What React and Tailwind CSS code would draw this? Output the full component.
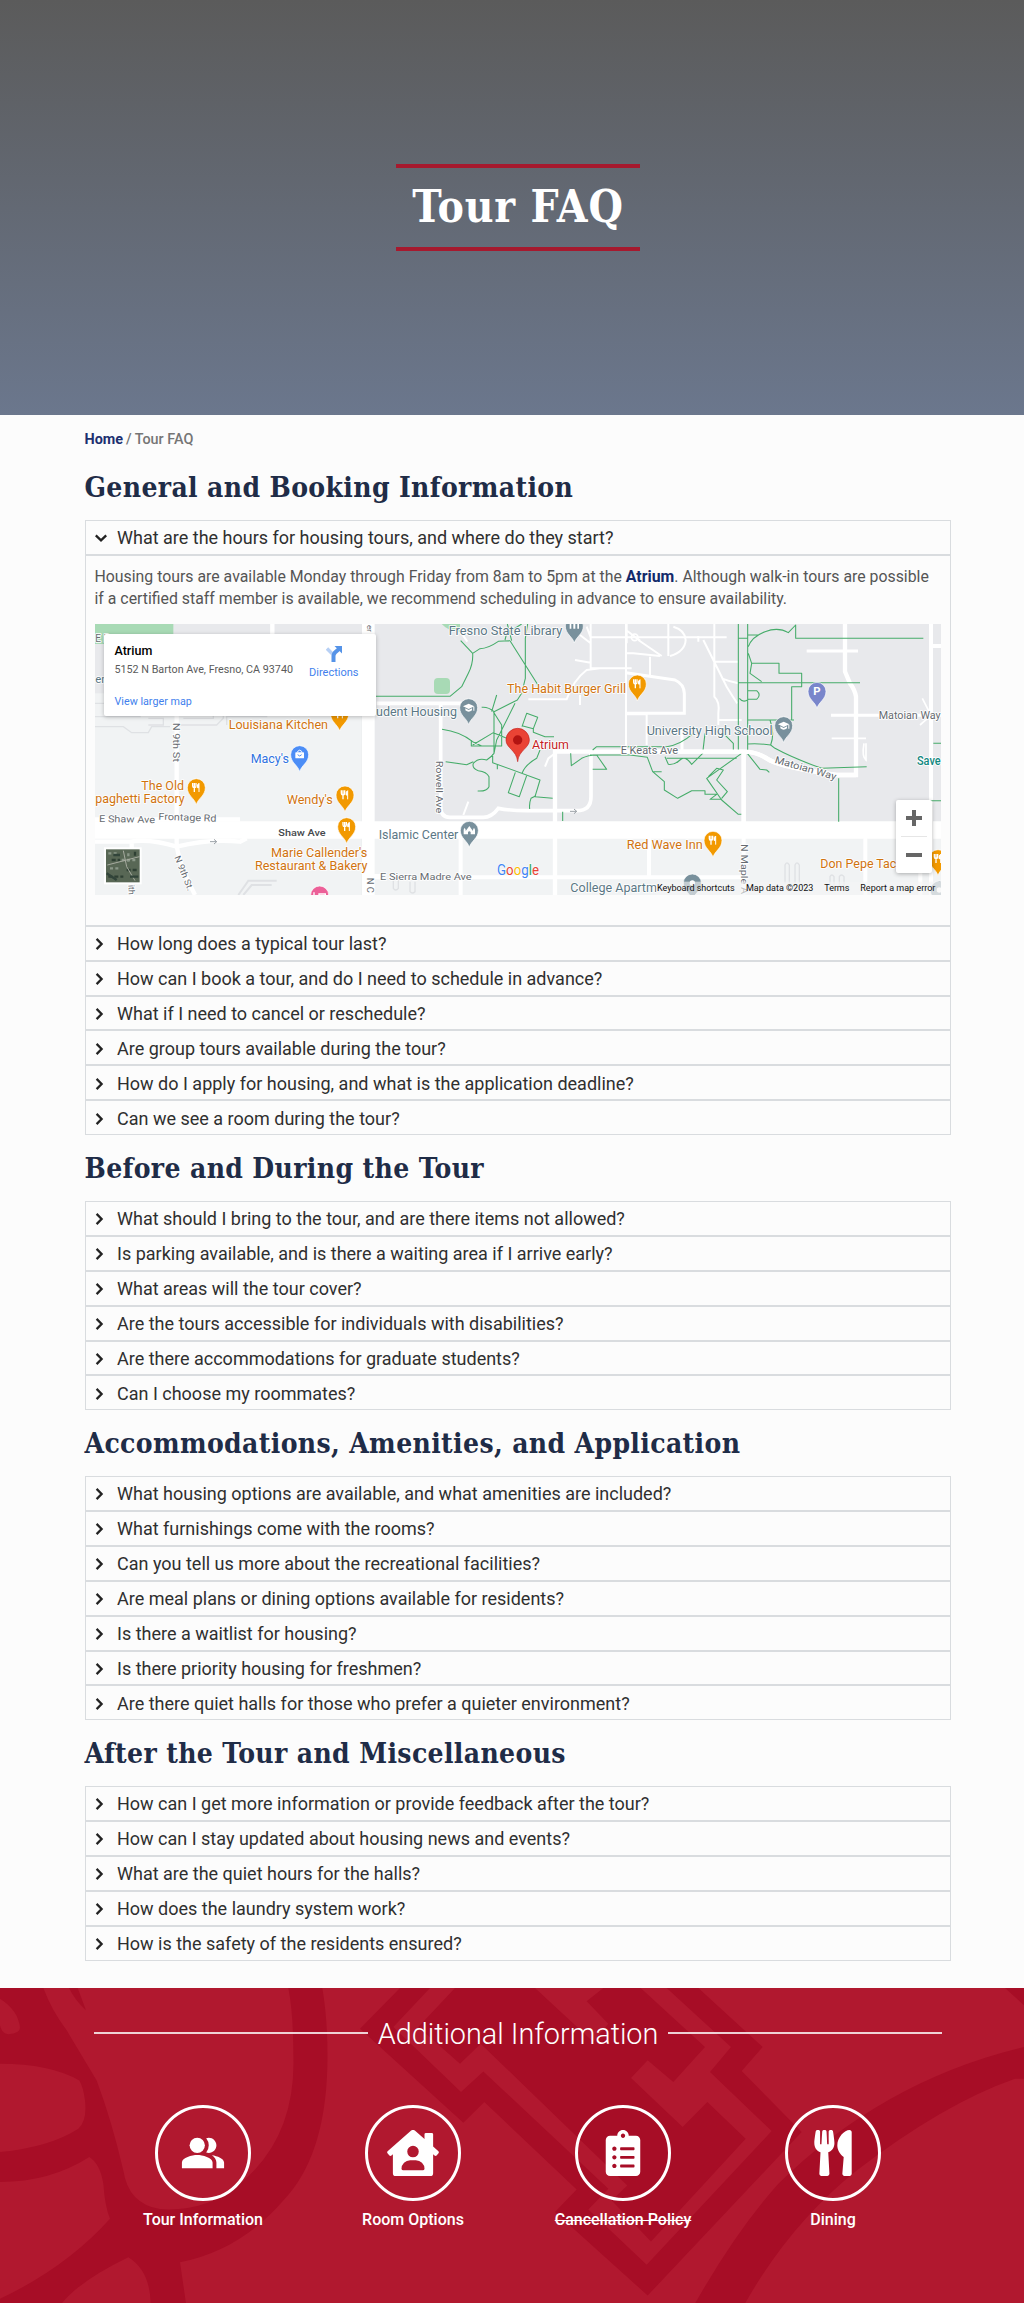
import React from "react";
import { MdPeopleAlt } from "react-icons/md";
import { FaHouseUser, FaClipboardList, FaUtensils } from "react-icons/fa";

const general = [
  "How long does a typical tour last?",
  "How can I book a tour, and do I need to schedule in advance?",
  "What if I need to cancel or reschedule?",
  "Are group tours available during the tour?",
  "How do I apply for housing, and what is the application deadline?",
  "Can we see a room during the tour?",
];
const before = [
  "What should I bring to the tour, and are there items not allowed?",
  "Is parking available, and is there a waiting area if I arrive early?",
  "What areas will the tour cover?",
  "Are the tours accessible for individuals with disabilities?",
  "Are there accommodations for graduate students?",
  "Can I choose my roommates?",
];
const amenities = [
  "What housing options are available, and what amenities are included?",
  "What furnishings come with the rooms?",
  "Can you tell us more about the recreational facilities?",
  "Are meal plans or dining options available for residents?",
  "Is there a waitlist for housing?",
  "Is there priority housing for freshmen?",
  "Are there quiet halls for those who prefer a quieter environment?",
];
const after = [
  "How can I get more information or provide feedback after the tour?",
  "How can I stay updated about housing news and events?",
  "What are the quiet hours for the halls?",
  "How does the laundry system work?",
  "How is the safety of the residents ensured?",
];

function Chevron({ open }) {
  return (
    <svg viewBox="0 0 12 12" className="h-3 w-3 shrink-0" fill="none" stroke="#222" strokeWidth="2.3">
      <path d={open ? "M0.8 3.4 6 8.4 11.2 3.4" : "M1.6 0.9 6.6 6 1.6 11.1"} />
    </svg>
  );
}

function Row({ text, open }) {
  return (
    <div className="flex h-[34.93px] items-center border border-[#d9dcdf] pl-[9px] pt-[2px] text-[18px] leading-none text-[#2f2f2f]">
      <Chevron open={open} />
      <span className="ml-[10.5px] whitespace-nowrap">{text}</span>
    </div>
  );
}

function Heading({ children }) {
  return (
    <h2 className="flex h-[65.6px] items-center whitespace-nowrap pt-[2px] font-['DejaVu_Serif_Condensed','DejaVu_Serif',serif] text-[28px] font-bold leading-none tracking-[0.35px] text-[#1f2c47]">
      {children}
    </h2>
  );
}

function Pin({ x, y, color, kind }) {
  return (
    <g transform={`translate(${x} ${y})`}>
      <path d="M0 51C-5 32-27 24-27 0A27 27 0 0 1 27 0C27 24 5 32 0 51Z" fill={color} stroke="#fff" strokeWidth="2" />
      {kind === "food" && (
        <g fill="none" stroke="#fff" strokeWidth="4">
          <path d="M-11-14V-5Q-11 0-6 0T-1-5V-14M-6-14V13" />
          <path d="M8 13V-13Q2-11 3 0H8" fill="#fff" strokeWidth="3" />
        </g>
      )}
      {kind === "school" && (
        <g fill="#fff">
          <path d="M-17-4 0-12 17-4 0 4Z" />
          <path d="M-10 2V8Q0 16 10 8V2L0 7ZM14-3H17V9H14Z" />
        </g>
      )}
      {kind === "bag" && (
        <g>
          <rect x="-13" y="-7" width="26" height="18" rx="2" fill="#fff" />
          <path d="M-6-7V-10Q0-17 6-10V-7" fill="none" stroke="#fff" strokeWidth="3" />
          <path d="M-6 0Q0 8 6 0" fill="none" stroke={color} strokeWidth="3" />
        </g>
      )}
      {kind === "temple" && (
        <path d="M-17 12V-2L-14-8-11-2V2L-7-3Q-4-8 0-13Q4-8 7-3L11 2V-2L14-8 17-2V12H4V5Q0 0-4 5V12Z" fill="#fff" />
      )}
      {kind === "parking" && (
        <text x="0" y="12" textAnchor="middle" fontSize="34" fontWeight="700" fill="#fff">P</text>
      )}
      {kind === "museum" && <path d="M-14-12H-9V8H-14ZM-3-14H3V8H-3ZM9-12H14V8H9Z" fill="#fff" />}
      {kind === "bed" && <path d="M-17-8V10M-17 4H17V10M17 4V-3H-2V3" fill="none" stroke="#fff" strokeWidth="4" />}
      {kind === "dot" && <circle r="8" fill="#fff" />}
    </g>
  );
}

function Label({ x, y, w, color = "#d0730f", size = 37, weight = 400, rotate = 0, children }) {
  return (
    <text
      transform={`translate(${x} ${y}) rotate(${rotate})`}
      fontSize={size}
      fontWeight={weight}
      fill={color}
      textLength={w}
      lengthAdjust="spacingAndGlyphs"
      stroke="#fff"
      strokeWidth="5"
      strokeLinejoin="round"
      paintOrder="stroke"
    >
      {children}
    </text>
  );
}

const ORANGE = "#f29900";
const SLATE = "#78909c";
const SLATE_TEXT = "#5b7785";
const ROAD = "#666b71";

function MapDrawing() {
  return (
    <svg viewBox="45 42 2538 813" className="block h-[271px] w-[846px]" fontFamily="Roboto, sans-serif">
      <rect x="45" y="42" width="2538" height="813" fill="#e8e9ec" />
      <rect x="45" y="250" width="800" height="605" fill="#f1f3f4" />
      <rect x="880" y="680" width="1710" height="175" fill="#f1f3f4" />
      <rect x="45" y="42" width="235" height="60" fill="#a8dab5" />
      <rect x="1062" y="204" width="48" height="48" rx="12" fill="#a8dab5" />
      <path d="M1085 42H1140V66Q1105 64 1085 42Z" fill="#a8dab5" />

      <g fill="none" stroke="#dfe1e4" strokeWidth="4">
        <path d="M45 280H180V320H45M45 350H130L155 368H205L215 350H270M205 325H250V345H205M300 345H410L430 325V300M310 325H400V300M440 345V320H560V300" />
        <path d="M475 855 505 812H590M490 855 515 825H575" strokeWidth="6" />
        <path d="M940 805V835Q947 845 955 835V810M990 815V845Q997 853 1005 845V815" />
        <path d="M2115 820V765Q2120 752 2128 765V820M2145 820V765Q2150 752 2158 765V820M2250 830V800Q2255 790 2262 800V830M2278 830V800Q2284 790 2292 800V830" />
      </g>

      <g fill="none" stroke="#fff">
        <path d="M45 660H2583" strokeWidth="52" />
        <path d="M865 42V855" strokeWidth="38" />
        <path d="M290 300V700Q292 750 345 855M577 42V75M155 700V855" strokeWidth="13" />
        <path d="M45 628H480M45 695H150Q210 685 290 710Q390 685 480 695L500 685" strokeWidth="13" />
        <path d="M850 800H900" strokeWidth="16" />
        <path d="M890 280H1185M1082 275V590Q1082 622 1110 622H1210Q1235 622 1255 595Q1290 602 1340 602H1490Q1533 602 1533 560V425" strokeWidth="11" />
        <path d="M1425 855V425H1990Q2030 425 2065 448T2270 495H2328V260Q2325 240 2310 220L2295 185V42" strokeWidth="13" />
        <path d="M1991 425V855M1142 685V855M1142 802H1990M1707 685V800M2553 42V855M2553 108H2583M2356 685V855M2521 770V855" strokeWidth="12" />
        <path d="M2180 123H2334M2253 316H2583" strokeWidth="9" />
        <path d="M2255 385H2358M2358 400V450Q2345 440 2352 400M2527 265 2553 316 2520 345" strokeWidth="5" />
        <path d="M1150 615 1165 575M1395 470 1405 445 1425 430M1162 95 1145 70" strokeWidth="6" />
        <path d="M1532 42V175H1655M1638 42V420M1532 82H1940M1485 150 1532 158M1500 75 1532 100M1520 50 1532 82M1638 130H1660L1740 138M1345 268H1460Q1480 210 1520 180L1560 175M1500 255V285M1710 140V195" strokeWidth="6" />
        <circle cx="1664" cy="82" r="10" strokeWidth="5" />
        <path d="M1765 42V138M1680 92 1638 60M1675 90 1745 138M1640 42V100M1780 50Q1815 60 1817 90Q1815 125 1770 138M1855 78V95M1870 90 1940 230Q1955 255 1972 280M1903 42V260Q1920 275 1915 310V345M1903 155H1975M1925 205Q1950 215 1975 220M1915 330H1985M1638 313H1700V405" strokeWidth="6" />
        <path d="M1638 188 1785 210Q1812 222 1813 250V310H1640" strokeWidth="9" />
        <path d="M1806 360V425" strokeWidth="9" />
      </g>

      <g fill="none" stroke="#45ac69" strokeWidth="3.2" strokeLinejoin="round">
        <path d="M885 259H1110L1145 230 1165 190Q1180 160 1178 130L1142 92M1178 130 1200 116Q1225 115 1255 94L1290 92M1282 42 1295 92M1290 92 1380 235M1343 42 1336 85V205L1325 250 1312 270 1242 305M1275 90 1280 70 1325 42" />
        <path d="M1205 292Q1225 290 1242 305V430Q1235 440 1220 450Q1195 442 1180 460Q1175 475 1195 482Q1220 485 1227 500V530Q1220 545 1193 543M1097 455 1160 464 1180 455M1086 358Q1140 365 1178 395L1205 408H1265V345L1240 305M1238 432V458L1380 510 1365 560 1418 565M1235 305 1250 255M1242 430 1250 390 1305 280M1174 390V408H1245M1240 368 1178 405M1240 368 1280 385M1326 490Q1335 465 1370 445L1380 420" />
        <path d="M1326 350 1340 310 1373 322 1360 356 1326 347M1360 356V367L1395 380H1422M1306 487 1285 548 1318 560 1340 497M1368 557 1353 565Q1347 580 1349 597M1252 465V478M1448 605V633" />
        <path d="M1472 430 1474 467 1505 445Q1525 435 1550 435L1580 478H1538M1538 420 1550 410H1760Q1800 405 1840 370M1530 435H1650L1702 442L1718 485 1753 515V540L1793 565 1835 542H1875V553H1910L1890 568H1925M1755 440 1765 463Q1785 465 1800 450T1835 463L1868 430L1875 370M1718 485H1745M1760 445H1970" />
        <path d="M1975 42V420M2003 42V425M1975 85H2003M1975 218H2340M2003 75H2035M2005 110Q2015 80 2055 65T2125 68L2147 45V85H2530M2005 130 2015 160 2010 190 2045 215M2015 160H2097V190H2165V230H2135V330M1978 265Q1990 280 2005 268H2030Q2045 255 2030 242H2003M2003 330H2142M2070 330Q2085 370 2072 405Q2040 400 2003 402M2072 405 2085 415Q2140 445 2225 475L2360 470M2276 505V635M2560 400H2583M2550 572H2583" />
        <path d="M1930 370 1960 400V420M2002 430 2040 478 2060 480 2068 487M1985 430 1880 505 1925 570 1975 613H1985M1885 500 1910 475 1930 480 1910 510 1942 545 1925 565" />
      </g>

      <path d="M1991 425V650M1700 425H1990Q2030 425 2065 448T2270 495H2328" fill="none" stroke="#fff" strokeWidth="13" />

      <g fill="none" stroke="#9aa0a6" strokeWidth="3">
        <path d="M390 695H410M402 688 410 695 402 702M1470 604H1490M1482 597 1490 604 1482 611" />
      </g>

      <Label x={46} y={97} size={30} color={ROAD}>E B</Label>
      <Label x={46} y={218} size={34} color={SLATE_TEXT}>en</Label>
      <Label x={280} y={338} rotate={90} size={27} color={ROAD} w={118}>N 9th St</Label>
      <Label x={283} y={742} rotate={68} size={27} color={ROAD} w={110}>N 9th St.</Label>
      <Label x={145} y={825} rotate={88} size={26} color={ROAD}>ith</Label>
      <Label x={861} y={803} rotate={90} size={28} color={ROAD}>N C</Label>
      <Label x={862} y={45} rotate={90} size={24} color={ROAD}>er</Label>
      <Label x={1068} y={452} rotate={90} size={28} color={ROAD} w={158}>Rowell Ave</Label>
      <Label x={1982} y={702} rotate={90} size={28} color={ROAD} w={150}>N Maple A</Label>
      <Label x={57} y={636} size={29} color={ROAD} w={168} rotate={1}>E Shaw Ave</Label>
      <Label x={235} y={629} size={29} color={ROAD} w={174} rotate={2}>Frontage Rd</Label>
      <Label x={595} y={679} size={29} weight={500} color="#45494d" w={142}>Shaw Ave</Label>
      <Label x={900} y={811} size={29} color={ROAD} w={275}>E Sierra Madre Ave</Label>
      <Label x={1622} y={433} size={30} color={ROAD} w={172}>E Keats Ave</Label>
      <Label x={2396} y={327} size={30} color={ROAD} w={186}>Matoian Way</Label>
      <Label x={2083} y={458} size={30} color={ROAD} w={190} rotate={16}>Matoian Way</Label>

      <Pin x={779} y={312} color={ORANGE} kind="food" />
      <Pin x={349} y={533} color={ORANGE} kind="food" />
      <Pin x={795} y={555} color={ORANGE} kind="food" />
      <Pin x={800} y={650} color={ORANGE} kind="food" />
      <Pin x={659} y={434} color="#4c8df6" kind="bag" />
      <Pin x={719} y={855} color="#ec6098" kind="bed" />
      <Pin x={1166} y={293} color={SLATE} kind="school" />
      <Pin x={1168} y={661} color={SLATE} kind="temple" />
      <Pin x={1483} y={48} color={SLATE} kind="museum" />
      <Pin x={1672} y={222} color={ORANGE} kind="food" />
      <Pin x={2111} y={347} color={SLATE} kind="school" />
      <Pin x={2211} y={244} color="#7986cb" kind="parking" />
      <Pin x={1899} y={691} color={ORANGE} kind="food" />
      <Pin x={2574} y={746} color={ORANGE} kind="food" />
      <Pin x={1837} y={819} color={SLATE} kind="dot" />
      <Pin x={2578} y={840} color="#a5b3bb" kind="dot" />

      <Label x={446} y={357} w={298}>Louisiana Kitchen</Label>
      <Label x={512} y={460} w={115} color="#2f72e0">Macy's</Label>
      <Label x={184} y={541} w={128}>The Old</Label>
      <Label x={46} y={580} w={268}>paghetti Factory</Label>
      <Label x={620} y={582} w={138}>Wendy's</Label>
      <Label x={573} y={741} w={289}>Marie Callender's</Label>
      <Label x={525} y={780} w={337}>Restaurant &amp; Bakery</Label>
      <Label x={1106} y={75} w={341} color={SLATE_TEXT}>Fresno State Library</Label>
      <Label x={1281} y={249} w={357}>The Habit Burger Grill</Label>
      <Label x={888} y={319} w={243} color={SLATE_TEXT}>udent Housing</Label>
      <Label x={896} y={687} w={239} color={SLATE_TEXT}>Islamic Center</Label>
      <Label x={1356} y={417} w={111} color="#c5221f">Atrium</Label>
      <Label x={1700} y={374} w={378} color={SLATE_TEXT}>University High School</Label>
      <Label x={1640} y={717} w={228}>Red Wave Inn</Label>
      <Label x={2221} y={774} w={228}>Don Pepe Tac</Label>
      <Label x={1471} y={847} w={260} color={SLATE_TEXT}>College Apartm</Label>
      <Label x={2511} y={465} color="#12877f" weight={500} w={71}>Save</Label>

      <path d="M1313 455C1310 420 1278 415 1278 390A35 35 0 0 1 1348 390C1348 415 1316 420 1313 455Z" fill="#ea4335" stroke="#c5221f" strokeWidth="2" />
      <circle cx="1313" cy="390" r="14" fill="#b31412" />

      <text x="1251" y="796" fontSize="42" fontWeight="400" textLength="126" lengthAdjust="spacingAndGlyphs" stroke="#fff" strokeWidth="3" paintOrder="stroke">
        <tspan fill="#4285f4">G</tspan>
        <tspan fill="#ea4335">o</tspan>
        <tspan fill="#fbbc04">o</tspan>
        <tspan fill="#4285f4">g</tspan>
        <tspan fill="#34a853">l</tspan>
        <tspan fill="#ea4335">e</tspan>
      </text>

      <rect x="1728" y="815" width="855" height="40" fill="#f5f5f5" opacity=".6" />
      <g fontSize="27" fill="#111">
        <text x="1731" y="844" textLength="233">Keyboard shortcuts</text>
        <text x="1998" y="844" textLength="202">Map data ©2023</text>
        <text x="2233" y="844" textLength="75">Terms</text>
        <text x="2341" y="844" textLength="225">Report a map error</text>
      </g>

      <rect x="75" y="715" width="107" height="105" fill="#586755" />
      <g strokeWidth="7" fill="none">
        <path d="M85 730H110M125 750H170M90 775H120M145 730V760" stroke="#8b9889" strokeDasharray="9 7" />
        <path d="M95 750H120M140 780H175M85 800H130M165 725V745" stroke="#2f4034" strokeDasharray="12 6" />
        <path d="M130 722 140 770 165 812M82 765 178 740" stroke="#a7aba0" strokeWidth="3" />
        <path d="M80 790 110 810M150 800H175M100 735H120" stroke="#31443a" />
      </g>
      <rect x="75" y="715" width="107" height="105" fill="none" stroke="#fff" strokeWidth="6" />
    </svg>
  );
}

function CampusMap() {
  return (
    <div className="relative mt-[14.5px] h-[271px] w-[846px] overflow-hidden">
      <MapDrawing />
      <div className="absolute left-[9px] top-[10px] flex h-[82px] w-[272px] justify-between rounded-[2px] bg-white pl-[11px] pr-[17px] shadow-[0_1px_4px_rgba(0,0,0,0.25)]">
        <div className="flex flex-col whitespace-nowrap">
          <span className="mt-[9px] text-[12.5px] font-medium leading-[15px] text-black">Atrium</span>
          <span className="mt-[5px] text-[10.75px] leading-[13px] text-[#5b5b5b]">5152 N Barton Ave, Fresno, CA 93740</span>
          <span className="mt-[19px] text-[10.75px] leading-[13px] text-[#427fed]">View larger map</span>
        </div>
        <div className="flex flex-col items-center text-[11px] leading-[13px] text-[#427fed]">
          <svg viewBox="0 0 16 17" className="mt-3 h-[17px] w-4">
            <path d="M1 2.5 7 8.5" stroke="#b7d0f5" strokeWidth="3.4" />
            <path d="M7.5 16V10Q7.5 8 9 6.5L13 3" stroke="#5593e8" strokeWidth="4" fill="none" />
            <path d="M8.5 0H16V7.5Z" fill="#5593e8" />
          </svg>
          <span className="mt-[3px]">Directions</span>
        </div>
      </div>
      <div className="absolute left-[801px] top-[176px] flex h-[73px] w-9 flex-col items-center rounded-[2px] bg-white shadow-[0_1px_4px_rgba(0,0,0,0.3)]">
        <svg viewBox="0 0 36 73" className="h-[73px] w-9" stroke="#666" strokeWidth="4">
          <path d="M10 18H26M18 10V26M10 55H26" />
          <path d="M5 36.5H31" stroke="#e6e6e6" strokeWidth="1" />
        </svg>
      </div>
    </div>
  );
}

function FooterPattern() {
  return (
    <svg viewBox="0 53 3072 946" preserveAspectRatio="none" className="absolute inset-0 h-full w-full" fill="#a70d26">
      <path d="M0 53H130Q155 120 200 180L290 330Q335 450 370 600Q385 700 480 716Q620 725 720 640Q890 500 880 250Q880 130 865 53H967Q985 160 982 290Q975 560 850 690Q720 840 540 875L558 999H452Q450 900 385 860Q240 930 185 999H0V985Q200 890 330 745Q315 710 310 640Q300 580 268 560Q150 635 0 635V545Q150 530 235 475Q262 450 255 390Q250 350 238 330Q150 280 0 280V165Q5 190 25 192Q60 188 60 172Q55 120 0 85Z" />
      <path d="M207 53H233L258 120Q225 90 207 53Z" />
      <g transform="translate(1050 45)">
        <path d="M150 8 30 130 340 412 403 350 680 612 615 680 893 930 1355 440 1175 257 1238 185 1045 8Z" />
        <path d="M240 8 130 125 333 320 400 258 775 610 715 672 890 838 1265 437 1080 260 1143 185 950 8Z" fill="#b1182f" />
        <path d="M315 8 205 125 330 235 392 175 832 600 785 645 903 768 1187 460 1072 350 998 425 843 278 893 225 970 290 1065 185 872 8H760L710 48 775 115 730 170 555 8Z" />
      </g>
      <path d="M2085 999Q2210 780 2335 640Q2650 330 3072 230V325L3045 325Q2830 400 2570 600Q2370 760 2235 999ZM3015 53H3072V105Z" />
    </svg>
  );
}

const links = [
  { label: "Tour Information", icon: <MdPeopleAlt className="h-[46px] w-[46px]" /> },
  { label: "Room Options", icon: <FaHouseUser className="h-[46px] w-[52px]" /> },
  { label: "Cancellation Policy", icon: <FaClipboardList className="h-[46px] w-[46px]" />, strike: true },
  { label: "Dining", icon: <FaUtensils className="h-[46px] w-[46px]" /> },
];

export default function App() {
  return (
    <div className="flex h-[2303px] w-[1024px] flex-col overflow-hidden bg-[#fcfcfc] font-['Roboto',sans-serif]">
      <header className="flex h-[415px] shrink-0 items-start justify-center bg-linear-to-b from-[#5b5b5b] to-[#6b778d] pl-3 pt-[164px]">
        <h1 className="flex h-[87px] w-[244px] items-center justify-center whitespace-nowrap border-y-4 border-[#a6192e] pb-[1px] font-['DejaVu_Serif_Condensed','DejaVu_Serif',serif] text-[44px] font-bold leading-none tracking-[0.8px] text-white">
          Tour FAQ
        </h1>
      </header>

      <main className="ml-[84.5px] flex w-[866px] shrink-0 flex-col">
        <nav className="mt-[16px] flex h-[18px] items-center gap-[3px] text-[14.4px] font-medium leading-none text-[#757575]">
          <a className="font-bold text-[#1c3070]">Home</a>
          <span>/</span>
          <span>Tour FAQ</span>
        </nav>
        <div className="mt-[5.4px]">
          <Heading>General and Booking Information</Heading>
          <Row open text="What are the hours for housing tours, and where do they start?" />
          <div className="h-[370.8px] border border-[#d9dcdf] px-[9px] pt-[10px]">
            <p className="whitespace-nowrap text-[15.85px] leading-[21.6px] text-[#555]">
              Housing tours are available Monday through Friday from 8am to 5pm at the{" "}
              <b className="text-[#13296b]">Atrium</b>. Although walk-in tours are possible
              <br />
              if a certified staff member is available, we recommend scheduling in advance to ensure availability.
            </p>
            <CampusMap />
          </div>
          {general.map((t) => <Row key={t} text={t} />)}
        </div>
        <Heading>Before and During the Tour</Heading>
        {before.map((t) => <Row key={t} text={t} />)}
        <Heading>Accommodations, Amenities, and Application</Heading>
        {amenities.map((t) => <Row key={t} text={t} />)}
        <Heading>After the Tour and Miscellaneous</Heading>
        {after.map((t) => <Row key={t} text={t} />)}
      </main>

      <footer className="relative mt-auto h-[315.5px] shrink-0 bg-[#b1182f] text-white">
        <FooterPattern />
        <div className="relative flex flex-col pl-[94px] pr-[82px] pt-[27.5px]">
          <div className="flex h-9 items-center gap-[10px]">
            <span className="h-[2.5px] flex-1 bg-white/80" />
            <h3 className="whitespace-nowrap pt-[3px] text-[28.8px] font-light leading-none">Additional Information</h3>
            <span className="h-[2.5px] flex-1 bg-white/80" />
          </div>
          <div className="ml-1 mt-[53.5px] grid w-[840px] grid-cols-4">
            {links.map((l) => (
              <a key={l.label} className="flex flex-col items-center">
                <span className="flex h-24 w-24 items-center justify-center rounded-full border-[3px] border-white">
                  {l.icon}
                </span>
                <span className={l.strike ? "mt-[9.5px] text-[16px] font-medium leading-5 line-through decoration-1" : "mt-[9.5px] text-[16px] font-medium leading-5"}>
                  {l.label}
                </span>
              </a>
            ))}
          </div>
        </div>
      </footer>
    </div>
  );
}
